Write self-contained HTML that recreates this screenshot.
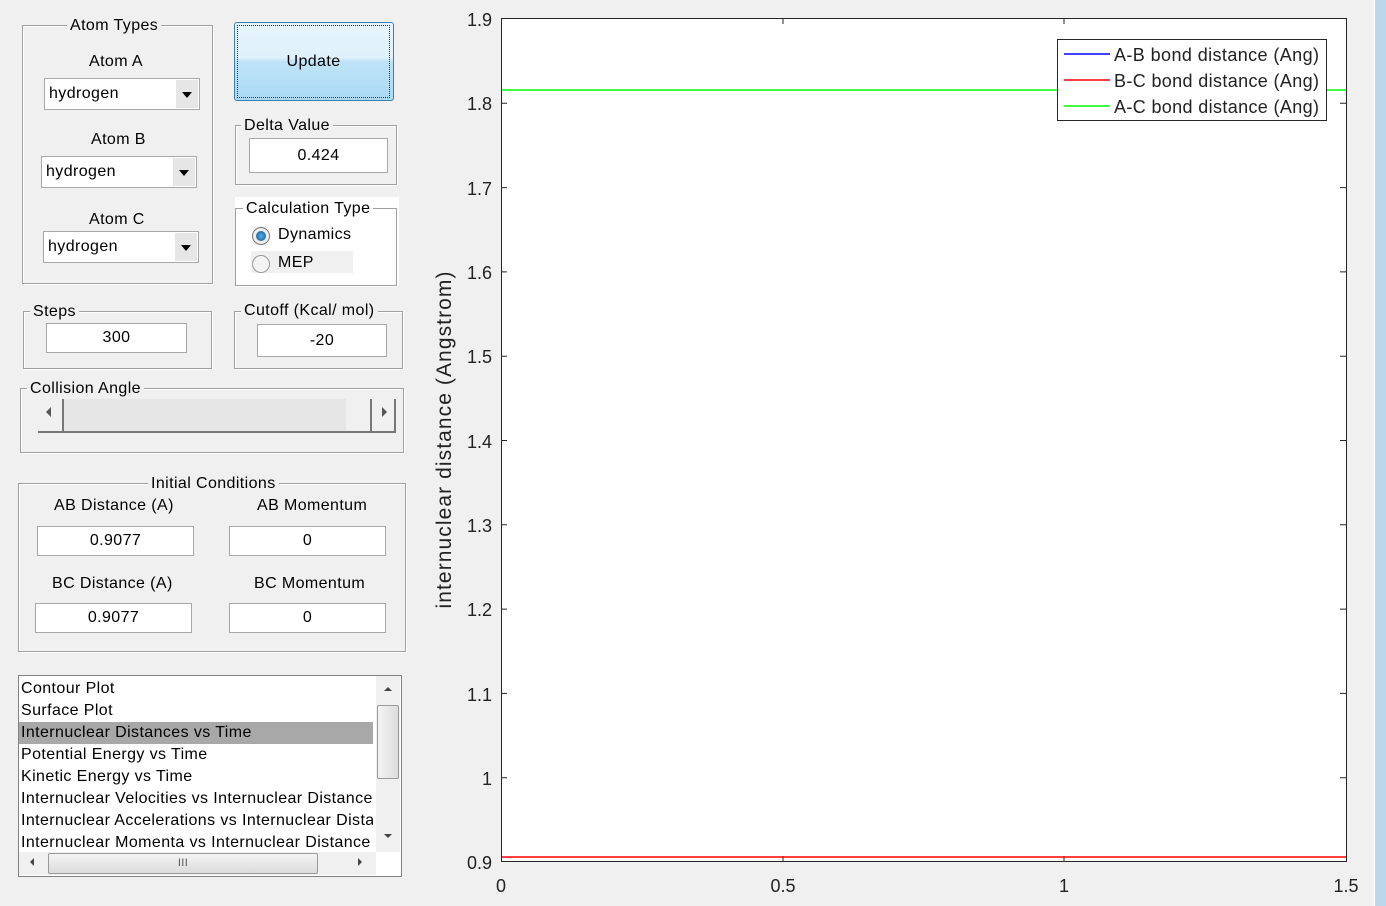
<!DOCTYPE html><html><head><style>
body{margin:0;width:1386px;height:906px;background:#f0f0f0;font-family:"Liberation Sans",sans-serif;font-size:16px;letter-spacing:0.4px;color:#000;position:relative;overflow:hidden}
.a{position:absolute}
.g{position:absolute;border:1px solid #a0a0a0;box-shadow:1px 1px 0 #fff inset,1px 1px 0 #fff}
.lg{position:absolute;background:#f0f0f0;padding:0 3px;white-space:nowrap}
.e{position:absolute;background:#fff;border:1px solid #a8a8a8;text-align:center;line-height:28px;height:28px}
.dd{position:absolute;background:#fff;border:1px solid #a8a8a8;height:30px;line-height:30px;padding-left:4px}
.dd b{position:absolute;right:1px;top:1px;width:22px;height:28px;background:#e6e6e6}
.dd b:after{content:"";position:absolute;left:6px;top:12px;border-left:5px solid transparent;border-right:5px solid transparent;border-top:6px solid #000}
</style></head><body>
<div class="g" style="left:22px;top:25px;width:189px;height:257px"></div>
<div class="lg" style="left:67px;top:17px">Atom Types</div>
<div class="a" style="left:89px;top:53px">Atom A</div>
<div class="dd" style="left:44px;top:78px;width:150px">hydrogen<b></b></div>
<div class="a" style="left:91px;top:131px">Atom B</div>
<div class="dd" style="left:41px;top:156px;width:150px">hydrogen<b></b></div>
<div class="a" style="left:89px;top:211px">Atom C</div>
<div class="dd" style="left:43px;top:231px;width:150px">hydrogen<b></b></div>
<div class="a" style="left:234px;top:22px;width:158px;height:77px;border:1px solid #3c7fb1;border-radius:3px;background:linear-gradient(#e5f4fc 0%,#e0f1fb 45%,#bfe3f7 50%,#a9daf5 100%);"></div>
<div class="a" style="left:237px;top:25px;width:151px;height:71px;border:1px dotted #333;text-align:center;line-height:71px">Update</div>
<div class="g" style="left:235px;top:125px;width:160px;height:58px"></div>
<div class="lg" style="left:241px;top:117px">Delta Value</div>
<div class="e" style="left:249px;top:138px;width:137px;height:33px;line-height:33px">0.424</div>
<div class="a" style="left:235px;top:197px;width:164px;height:88px;background:#fff"></div>
<div class="g" style="left:235px;top:208px;width:160px;height:76px;background:#fff"></div>
<div class="lg" style="left:243px;top:200px;background:#fff">Calculation Type</div>
<div class="a" style="left:251px;top:251px;width:102px;height:22px;background:#f0f0f0"></div>
<div class="a" style="left:252px;top:227px;width:16px;height:16px;border-radius:50%;border:1px solid #777;background:#eee"></div>
<div class="a" style="left:256px;top:231px;width:10px;height:10px;border-radius:50%;background:radial-gradient(#4ab0f0,#1a4f7a)"></div>
<div class="a" style="left:278px;top:226px">Dynamics</div>
<div class="a" style="left:252px;top:255px;width:16px;height:16px;border-radius:50%;border:1px solid #999;background:#f4f4f4"></div>
<div class="a" style="left:278px;top:254px">MEP</div>
<div class="g" style="left:23px;top:311px;width:187px;height:56px"></div>
<div class="lg" style="left:30px;top:303px">Steps</div>
<div class="e" style="left:46px;top:323px;width:139px">300</div>
<div class="g" style="left:234px;top:311px;width:167px;height:56px"></div>
<div class="lg" style="left:241px;top:302px">Cutoff (Kcal/ mol)</div>
<div class="e" style="left:257px;top:324px;width:128px;height:31px;line-height:31px">-20</div>
<div class="g" style="left:20px;top:388px;width:382px;height:63px"></div>
<div class="lg" style="left:27px;top:380px">Collision Angle</div>
<div class="a" style="left:38px;top:399px;width:358px;height:32px;background:#e6e6e6;border-bottom:2px solid #777"></div>
<div class="a" style="left:38px;top:399px;width:24px;height:32px;background:#f0f0f0;border-right:2px solid #777"></div>
<div class="a" style="left:46px;top:407px;border-top:5px solid transparent;border-bottom:5px solid transparent;border-right:5px solid #555"></div>
<div class="a" style="left:346px;top:399px;width:24px;height:32px;background:#f0f0f0;border-right:2px solid #777"></div>
<div class="a" style="left:372px;top:399px;width:22px;height:32px;background:#f0f0f0;border-right:2px solid #777"></div>
<div class="a" style="left:382px;top:407px;border-top:5px solid transparent;border-bottom:5px solid transparent;border-left:5px solid #555"></div>
<div class="g" style="left:18px;top:483px;width:386px;height:167px"></div>
<div class="lg" style="left:148px;top:475px">Initial Conditions</div>
<div class="a" style="left:54px;top:497px">AB Distance (A)</div>
<div class="a" style="left:257px;top:497px">AB Momentum</div>
<div class="e" style="left:37px;top:526px;width:155px">0.9077</div>
<div class="e" style="left:229px;top:526px;width:155px">0</div>
<div class="a" style="left:52px;top:575px">BC Distance (A)</div>
<div class="a" style="left:254px;top:575px">BC Momentum</div>
<div class="e" style="left:35px;top:603px;width:155px">0.9077</div>
<div class="e" style="left:229px;top:603px;width:155px">0</div>
<div class="a" style="left:18px;top:675px;width:382px;height:200px;background:#fff;border:1px solid #828282;line-height:22px;font-size:16px;overflow:hidden;white-space:nowrap">
<div style="padding:2px 0 0 2px;width:352px;overflow:hidden">Contour Plot<br>Surface Plot<br><span style="display:block;background:#a8a8a8;margin-left:-2px;padding-left:2px">Internuclear Distances vs Time</span>Potential Energy vs Time<br>Kinetic Energy vs Time<br>Internuclear Velocities vs Internuclear Distance<br>Internuclear Accelerations vs Internuclear Distance<br>Internuclear Momenta vs Internuclear Distance</div>
</div>
<div class="a" style="left:376px;top:676px;width:24px;height:176px;background:#f0f0f0"></div>
<div class="a" style="left:377px;top:705px;width:20px;height:72px;background:linear-gradient(90deg,#f4f4f4,#dcdcdc);border:1px solid #999;border-radius:2px"></div>
<div class="a" style="left:384px;top:687px;border-left:4px solid transparent;border-right:4px solid transparent;border-bottom:4px solid #444"></div>
<div class="a" style="left:384px;top:834px;border-left:4px solid transparent;border-right:4px solid transparent;border-top:4px solid #444"></div>
<div class="a" style="left:19px;top:852px;width:357px;height:23px;background:#f0f0f0"></div>
<div class="a" style="left:48px;top:853px;width:268px;height:19px;background:linear-gradient(#f4f4f4,#dcdcdc);border:1px solid #999;border-radius:2px;font-size:11px;text-align:center;line-height:19px;color:#555">III</div>
<div class="a" style="left:30px;top:858px;border-top:4px solid transparent;border-bottom:4px solid transparent;border-right:4px solid #444"></div>
<div class="a" style="left:358px;top:858px;border-top:4px solid transparent;border-bottom:4px solid transparent;border-left:4px solid #444"></div>
<svg class="a" style="left:0;top:0;letter-spacing:0" width="1386" height="906">
<rect x="501.5" y="18.5" width="845" height="843" fill="#fff" stroke="#262626"/>
<g stroke="#262626">
<path d="M783 18v6M1064 18v6M783 862v-6M1064 862v-6"/>
<path d="M501 103.3h6M501 187.6h6M501 271.9h6M501 356.2h6M501 440.5h6M501 524.8h6M501 609.1h6M501 693.4h6M501 777.7h6"/>
<path d="M1346 103.3h-6M1346 187.6h-6M1346 271.9h-6M1346 356.2h-6M1346 440.5h-6M1346 524.8h-6M1346 609.1h-6M1346 693.4h-6M1346 777.7h-6"/>
</g>
<line x1="502" y1="90" x2="1346" y2="90" stroke="#00ff00" stroke-width="1.5"/>
<line x1="502" y1="857" x2="1346" y2="857" stroke="#ff0000" stroke-width="1.5"/>
<rect x="1057.5" y="39.5" width="269" height="81" fill="#fff" stroke="#262626"/>
<line x1="1064" y1="54" x2="1110" y2="54" stroke="#0000ff" stroke-width="1.5"/>
<line x1="1064" y1="80" x2="1110" y2="80" stroke="#ff0000" stroke-width="1.5"/>
<line x1="1064" y1="106" x2="1110" y2="106" stroke="#00ff00" stroke-width="1.5"/>
<g font-family="Liberation Sans" font-size="17" fill="#222">
<g font-size="18" textLength="205">
<text x="1114" y="61" textLength="205">A-B bond distance (Ang)</text>
<text x="1114" y="87" textLength="205">B-C bond distance (Ang)</text>
<text x="1114" y="113" textLength="205">A-C bond distance (Ang)</text>
</g>
<g text-anchor="end" font-size="18">
<text x="492" y="26">1.9</text><text x="492" y="110">1.8</text><text x="492" y="195">1.7</text><text x="492" y="279">1.6</text><text x="492" y="363">1.5</text><text x="492" y="448">1.4</text><text x="492" y="532">1.3</text><text x="492" y="616">1.2</text><text x="492" y="701">1.1</text><text x="492" y="785">1</text><text x="492" y="869">0.9</text>
</g>
<g text-anchor="middle" font-size="18">
<text x="501" y="892">0</text><text x="783" y="892">0.5</text><text x="1064" y="892">1</text><text x="1346" y="892">1.5</text>
</g>
<text transform="translate(451,440) rotate(-90)" text-anchor="middle" font-size="21" textLength="337">internuclear distance (Angstrom)</text>
</g>
<rect x="1374" y="0" width="12" height="906" fill="#bcd6ee"/>
<line x1="1374.5" y1="0" x2="1374.5" y2="906" stroke="#fff" stroke-width="1"/>
</svg>
</body></html>
